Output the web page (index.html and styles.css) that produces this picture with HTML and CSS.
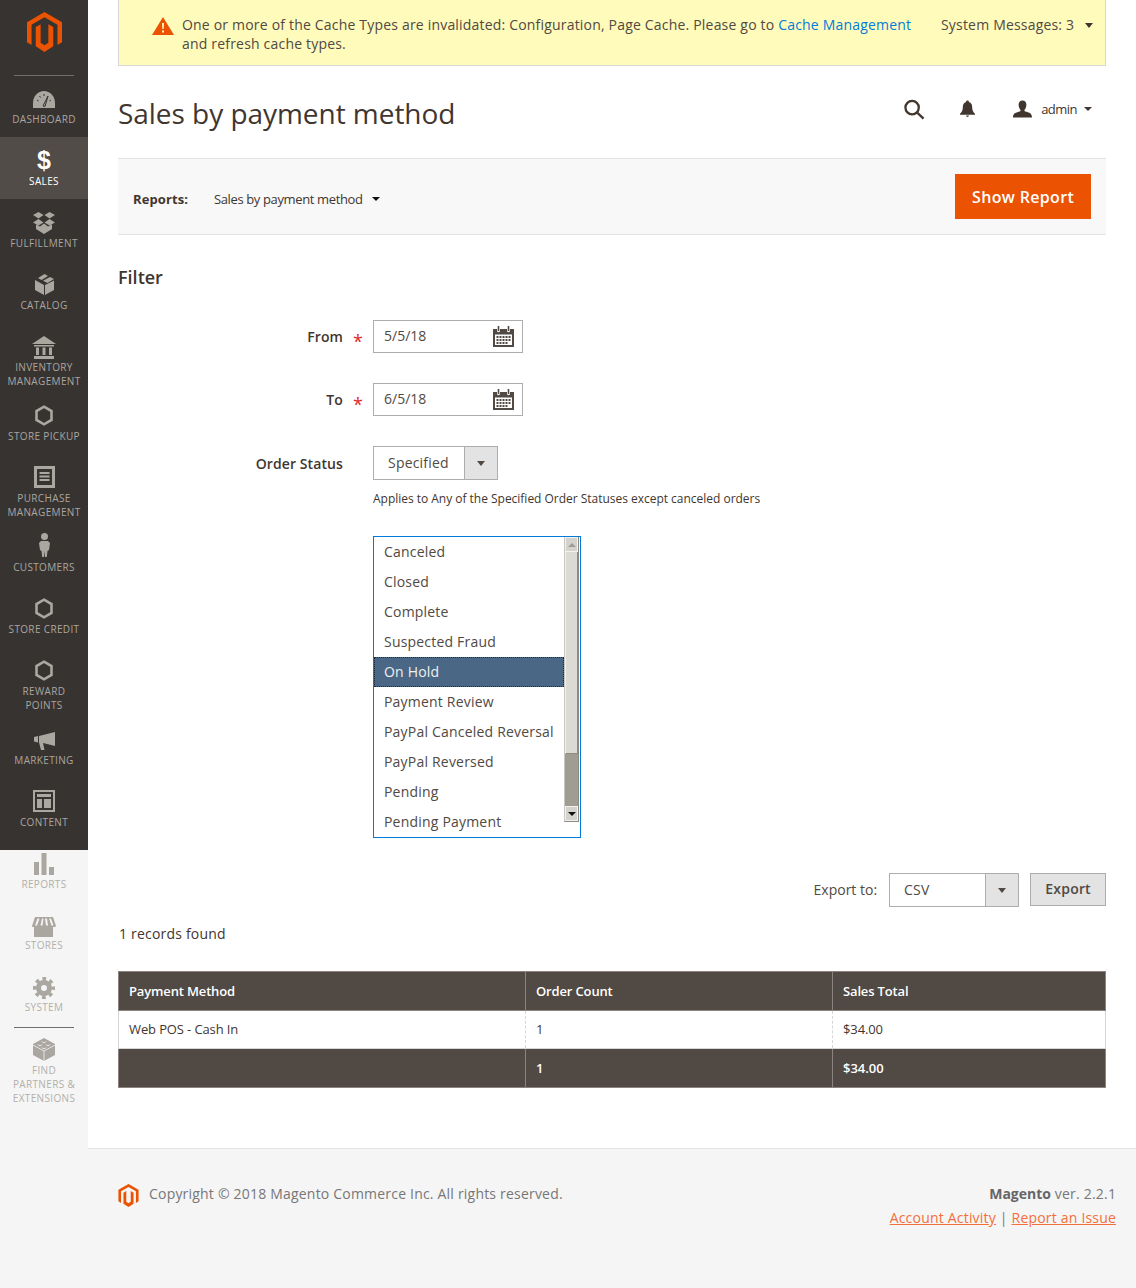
FILE: index.html
```html
<!DOCTYPE html>
<html lang="en">
<head>
  <meta charset="UTF-8">
  <title>Sales by payment method</title>
  <link rel="stylesheet" href="styles.css">
</head>
<body>

  <!-- Sidebar -->
  <nav class="menu">
    <div class="menu__dark">
      <div class="menu__logo">
        <svg class="logo logo--big" viewBox="0 0 100 114"><path d="M50 0 L100 29 V86 L87 94 V36 L50 15 L13 36 V94 L0 86 V29 Z"/><path d="M25 43 L39 35 V88 L50 95 L61 88 V35 L75 43 V98 L50 114 L25 98 Z"/></svg>
      </div>
      <a class="menu__item">
        <span class="menu__icon menu__icon--down"><svg width="22" height="17" viewBox="0 0 22 17"><path d="M0 17 V12 C0 5 5 0 11 0 C17 0 22 5 22 12 V17 Z"/><path class="cut" d="M10 15 L15 5 L12 15.500 Z M4 9 l1.500 1 M6.500 5 l1 1.500 M11 3 v2 M18 9 l-1.500 1" stroke-width="1"/></svg></span>
        <span class="menu__label">Dashboard</span>
      </a>
      <a class="menu__item menu__item--active">
        <span class="menu__icon"><span class="dollar">$</span></span>
        <span class="menu__label">Sales</span>
      </a>
      <a class="menu__item">
        <span class="menu__icon"><svg width="22" height="22" viewBox="0 0 22 22"><path d="M5.500 0 L10.500 3 L5.500 6.500 L0 3 Z M16.500 0 L22 3 L16.500 6.500 L11.500 3 Z M5.500 7 L10.500 10.500 L5.500 13.500 L0 10.500 Z M16.500 7 L22 10.500 L16.500 13.500 L11.500 10.500 Z M11 11.500 L15 14.500 L19 12.500 V17 L11 22 L3 17 V12.500 L7 14.500 Z"/></svg></span>
        <span class="menu__label">Fulfillment</span>
      </a>
      <a class="menu__item">
        <span class="menu__icon"><svg width="19" height="21" viewBox="0 0 19 21"><path d="M9.500 0 L13 2 L6.500 6 L3 4 Z M15 3 L19 5 L12.500 9 L9.500 7.500 L8 6.800 Z M0 6 L9 11 V21 L0 16 Z M19 6.500 V16 L10 21 V11 Z"/></svg></span>
        <span class="menu__label">Catalog</span>
      </a>
      <a class="menu__item menu__item--two">
        <span class="menu__icon menu__icon--down"><svg width="24" height="23" viewBox="0 0 24 23"><path d="M12 0 L24 8 H0 Z M2 9 H22 V10.500 H2 Z M4 11.500 H7 V19 H4 Z M10.500 11.500 H13.500 V19 H10.500 Z M17 11.500 H20 V19 H17 Z M2 20 H22 V23 H2 Z"/></svg></span>
        <span class="menu__label">Inventory Management</span>
      </a>
      <a class="menu__item">
        <span class="menu__icon"><svg width="18" height="21" viewBox="0 0 18 21"><path class="hex" d="M9 1.700 L16.500 6 V15 L9 19.300 L1.500 15 V6 Z"/></svg></span>
        <span class="menu__label">Store Pickup</span>
      </a>
      <a class="menu__item menu__item--two">
        <span class="menu__icon menu__icon--up"><svg width="21" height="22" viewBox="0 0 21 22"><path fill-rule="evenodd" d="M0 0 H21 V22 H0 Z M3 3 V19 H18 V3 Z M5.500 6 H15.500 V8 H5.500 Z M5.500 9.500 H15.500 V11.500 H5.500 Z M5.500 13 H15.500 V15 H5.500 Z"/></svg></span>
        <span class="menu__label">Purchase Management</span>
      </a>
      <a class="menu__item">
        <span class="menu__icon menu__icon--up2"><svg width="11" height="24" viewBox="0 0 11 24"><circle cx="5.500" cy="3.500" r="3.500"/><path d="M2 8 H9 L11 10 L10 17 L8.500 18 L7.800 24 H6 L5.500 18 L5 24 H3.200 L2.500 18 L1 17 L0 10 Z"/></svg></span>
        <span class="menu__label">Customers</span>
      </a>
      <a class="menu__item">
        <span class="menu__icon"><svg width="18" height="21" viewBox="0 0 18 21"><path class="hex" d="M9 1.700 L16.500 6 V15 L9 19.300 L1.500 15 V6 Z"/></svg></span>
        <span class="menu__label">Store Credit</span>
      </a>
      <a class="menu__item menu__item--two">
        <span class="menu__icon"><svg width="18" height="21" viewBox="0 0 18 21"><path class="hex" d="M9 1.700 L16.500 6 V15 L9 19.300 L1.500 15 V6 Z"/></svg></span>
        <span class="menu__label">Reward<br>Points</span>
      </a>
      <a class="menu__item">
        <span class="menu__icon menu__icon--down"><svg width="21" height="18" viewBox="0 0 21 18"><path d="M21 0 V14 L9 11 L10.500 18 H7 L5 10.500 V4 Z M0 5 L4 4 V10.500 L0 9.500 Z"/></svg></span>
        <span class="menu__label">Marketing</span>
      </a>
      <a class="menu__item menu__item--last">
        <span class="menu__icon menu__icon--up"><svg width="22" height="22" viewBox="0 0 22 22"><path fill-rule="evenodd" d="M0 0 H22 V22 H0 Z M2 2 V20 H20 V2 Z M4 4 H18 V7 H4 Z M4 9 H9 V18 H4 Z M11 9 H18 V18 H11 Z"/></svg></span>
        <span class="menu__label">Content</span>
      </a>
    </div>
    <div class="menu__light">
      <a class="menu__item menu__item--first">
        <span class="menu__icon"><svg width="20" height="22" viewBox="0 0 20 22"><path d="M0 9 H5 V22 H0 Z M7.500 0 H12.500 V22 H7.500 Z M15 14 H20 V22 H15 Z"/></svg></span>
        <span class="menu__label">Reports</span>
      </a>
      <a class="menu__item">
        <span class="menu__icon menu__icon--down2"><svg width="24" height="20" viewBox="0 0 24 20"><path fill-rule="evenodd" d="M3 0 H21 L24 9 C24 10 22 10 21 10 V20 H2 V10 C1 10 0 10 0 9 Z M5.500 1.500 L3 8.500 H5 L7.500 1.500 Z M10 1.500 L8.500 8.500 H10.500 L11.500 1.500 Z M13 1.500 L14 8.500 H16 L15 1.500 Z M17 1.500 L19.500 8.500 H21.500 L19 1.500 Z"/></svg></span>
        <span class="menu__label">Stores</span>
      </a>
      <a class="menu__item">
        <span class="menu__icon menu__icon--down"><svg width="22" height="22" viewBox="0 0 22 22"><circle class="gear" cx="11" cy="11" r="5.500"/><circle class="gear__teeth" cx="11" cy="11" r="9"/></svg></span>
        <span class="menu__label">System</span>
      </a>
      <a class="menu__item menu__item--partners">
        <span class="menu__icon menu__icon--down"><svg width="22" height="23" viewBox="0 0 22 23"><path d="M11 0 L22 6 V17 L11 23 L0 17 V6 Z"/><path class="cut" d="M0 7 L11 13 L22 7 M11 13 V23 M5 6.500 C5 8 9 8 9 6.500 M13 6.500 C13 8 17 8 17 6.500 M9 3.500 C9 5 13 5 13 3.500 M9 9.500 C9 11 13 11 13 9.500" stroke-width="0.800"/></svg></span>
        <span class="menu__label">Find<br>Partners &amp;<br>Extensions</span>
      </a>
    </div>
  </nav>

  <div class="page">
    <main class="page__main">

      <!-- System message -->
      <div class="message">
        <svg class="message__icon" width="22" height="18" viewBox="0 0 22 18"><path fill-rule="evenodd" d="M11 0 L22 18 H0 Z M10 6 L10.300 12 H11.700 L12 6 Z M10 13.500 V15.500 H12 V13.500 Z"/></svg>
        <p class="message__text">One or more of the Cache Types are invalidated: Configuration, Page Cache. Please go to <a class="link">Cache Management</a> and refresh cache types.</p>
        <div class="message__count">System Messages: 3 <span class="caret caret--msg"></span></div>
      </div>

      <!-- Title and actions -->
      <header class="head">
        <h1 class="head__title">Sales by payment method</h1>
        <div class="head__actions">
          <svg class="head__search" width="21" height="21" viewBox="0 0 22 21"><circle cx="8.500" cy="8.500" r="7" /><path d="M13.500 13.500 L20.500 20"/></svg>
          <svg class="head__bell" width="15" height="18" viewBox="0 0 16 18"><path d="M8 0 C9 0 9.500 .7 9.500 1.500 C12 2.300 13 4.500 13 7 C13 10 14 12 16 14 V15 H0 V14 C2 12 3 10 3 7 C3 4.500 4 2.300 6.500 1.500 C6.500 .7 7 0 8 0 Z M6.500 16 H9.500 C9.500 18 6.500 18 6.500 16 Z"/></svg>
          <svg class="head__user" width="19" height="18" viewBox="0 0 20 18"><path d="M10 0 C13 0 14.500 2.500 14 5.500 C13.700 7.500 13 9 12 10 C12 11 12.500 11.500 14 12 C17 13 20 13.500 20 18 H0 C0 13.500 3 13 6 12 C7.500 11.500 8 11 8 10 C7 9 6.300 7.500 6 5.500 C5.500 2.500 7 0 10 0 Z"/></svg>
          <span class="head__admin">admin</span>
          <span class="caret caret--head"></span>
        </div>
      </header>

      <!-- Report switcher -->
      <div class="toolbar">
        <strong class="toolbar__label">Reports:</strong>
        <span class="toolbar__value">Sales by payment method</span>
        <span class="caret caret--dark"></span>
        <button class="btn-primary">Show Report</button>
      </div>

      <h2 class="filter-title">Filter</h2>

      <div class="field">
        <label class="field__label">From</label>
        <span class="field__star">*</span>
        <div class="date-input">
          <span>5/5/18</span>
          <svg width="21" height="22" viewBox="0 0 21 22"><use href="#cal"/></svg>
        </div>
      </div>
      <div class="field">
        <label class="field__label">To</label>
        <span class="field__star">*</span>
        <div class="date-input">
          <span>6/5/18</span>
          <svg width="21" height="22" viewBox="0 0 21 22"><use href="#cal"/></svg>
        </div>
      </div>
      <div class="field">
        <label class="field__label">Order Status</label>
        <span class="field__star"></span>
        <div class="select select--status">
          <span class="select__value">Specified</span>
          <span class="select__arrow"><span class="caret caret--select"></span></span>
        </div>
      </div>
      <p class="note">Applies to Any of the Specified Order Statuses except canceled orders</p>

      <!-- Status multiselect -->
      <div class="multi">
        <ul class="multi__list">
          <li>Canceled</li>
          <li>Closed</li>
          <li>Complete</li>
          <li>Suspected Fraud</li>
          <li class="is-selected">On Hold</li>
          <li>Payment Review</li>
          <li>PayPal Canceled Reversal</li>
          <li>PayPal Reversed</li>
          <li>Pending</li>
          <li>Pending Payment</li>
        </ul>
        <div class="scroll">
          <span class="scroll__btn"><span class="scroll__up"></span></span>
          <span class="scroll__thumb"></span>
          <span class="scroll__trough"></span>
          <span class="scroll__btn"><span class="scroll__down"></span></span>
        </div>
      </div>

      <div class="export">
        <span class="export__label">Export to:</span>
        <div class="select select--export">
          <span class="select__value">CSV</span>
          <span class="select__arrow"><span class="caret caret--select"></span></span>
        </div>
        <button class="btn-export">Export</button>
      </div>

      <p class="records">1 records found</p>

      <table class="grid">
        <thead>
          <tr>
            <th class="col-a">Payment Method</th>
            <th class="col-b">Order Count</th>
            <th>Sales Total</th>
          </tr>
        </thead>
        <tbody>
          <tr>
            <td>Web POS - Cash In</td>
            <td>1</td>
            <td>$34.00</td>
          </tr>
        </tbody>
        <tfoot>
          <tr>
            <td></td>
            <td>1</td>
            <td>$34.00</td>
          </tr>
        </tfoot>
      </table>
    </main>

    <footer class="foot">
      <div class="foot__left">
        <svg class="logo logo--small" viewBox="0 0 100 114"><path d="M50 0 L100 29 V86 L87 94 V36 L50 15 L13 36 V94 L0 86 V29 Z"/><path d="M25 43 L39 35 V88 L50 95 L61 88 V35 L75 43 V98 L50 114 L25 98 Z"/></svg>
        <span>Copyright © 2018 Magento Commerce Inc. All rights reserved.</span>
      </div>
      <div class="foot__right">
        <div class="foot__version"><strong>Magento</strong> ver. 2.2.1</div>
        <div class="foot__links"><a>Account Activity</a> <span>|</span> <a>Report an Issue</a></div>
      </div>
    </footer>
  </div>

  <!-- calendar icon, used by both date inputs -->
  <svg class="defs" width="0" height="0">
    <symbol id="cal" viewBox="0 0 21 22">
      <path fill="#514943" fill-rule="evenodd" d="M0 3 H4 V5 C4 6.500 7 6.500 7 5 V3 H14 V5 C14 6.500 17 6.500 17 5 V3 H21 V21 H0 Z M2 8.500 V19 H19 V8.500 Z"/>
      <path fill="#514943" d="M4.700 0 H6.300 V5 H4.700 Z M14.700 0 H16.300 V5 H14.700 Z M3.500 10 H5.500 V12 H3.500 Z M6.500 10 H8.500 V12 H6.500 Z M9.500 10 H11.500 V12 H9.500 Z M12.500 10 H14.500 V12 H12.500 Z M15.500 10 H17.500 V12 H15.500 Z M3.500 13 H5.500 V15 H3.500 Z M6.500 13 H8.500 V15 H6.500 Z M9.500 13 H11.500 V15 H9.500 Z M12.500 13 H14.500 V15 H12.500 Z M15.500 13 H17.500 V15 H15.500 Z M3.500 16 H5.500 V18 H3.500 Z M6.500 16 H8.500 V18 H6.500 Z M9.500 16 H11.500 V18 H9.500 Z M12.500 16 H14.500 V18 H12.500 Z"/>
    </symbol>
  </svg>

</body>
</html>
```

FILE: styles.css
```css
/* Reset */
*, *::before, *::after {
  margin: 0;
  padding: 0;
  box-sizing: border-box;
}
body {
  display: flex;
  min-height: 1288px;
  font-family: "Open Sans", sans-serif;
  font-size: 14px;
  color: #41362f;
  background: #f5f5f5;
}
.defs {
  position: absolute;
}

/* ===== Sidebar ===== */
.menu {
  width: 88px;
  flex: none;
}
.menu__dark {
  background: #373330;
  height: 850px;
}
.menu__logo {
  height: 76px;
  margin: 0 14px;
  padding-top: 12px;
  border-bottom: 1px solid #736d69;
  display: flex;
  justify-content: center;
}
.logo {
  fill: #eb5202;
}
.logo--big {
  width: 35px;
  height: 40px;
}
.logo--small {
  width: 21px;
  height: 23px;
}
.menu__item {
  display: block;
  height: 62px;
  padding-top: 11px;
  color: #aaa6a0;
  text-align: center;
}
.menu__item:nth-child(2) {
  margin-top: -1px;
}
.menu__item--two {
  height: 69px;
}
.menu__item--last {
  height: 72px;
}
.menu__item--first {
  height: 52px;
  padding-top: 1px;
}
.menu__item--partners {
  margin: 2px 14px 0;
  padding-top: 8px;
  border-top: 1px solid #736d69;
  height: auto;
}
.menu__item--partners .menu__label {
  margin: 1px -14px 0;
  line-height: 14px;
}
.menu__item--active {
  background: #514c48;
  color: #fff;
}
.menu__icon {
  display: flex;
  height: 25px;
  margin-bottom: 2px;
  align-items: center;
  justify-content: center;
}
/* nudges so each glyph sits where the original icon font put it */
.menu__icon--down svg {
  margin-top: 2px;
}
.menu__icon--down2 svg {
  margin-top: 4px;
}
.menu__icon--up svg {
  margin-bottom: 2px;
}
.menu__icon--up2 svg {
  margin-bottom: 4px;
}
.menu__icon svg {
  fill: currentColor;
}
.menu__icon .cut {
  fill: none;
  stroke: #373330;
}
.menu__light .menu__icon .cut {
  stroke: #f5f5f5;
}
.menu__icon .hex {
  fill: none;
  stroke: currentColor;
  stroke-width: 2.600;
}
.menu__icon .gear {
  fill: none;
  stroke: currentColor;
  stroke-width: 5;
}
.menu__icon .gear__teeth {
  fill: none;
  stroke: currentColor;
  stroke-width: 4;
  stroke-dasharray: 3.600 3.470;
  stroke-dashoffset: 1.800;
}
.menu__label {
  display: block;
  font-size: 10px;
  line-height: 13.500px;
  letter-spacing: .35px;
  text-transform: uppercase;
}
.menu__light .menu__label {
  color: #b3afa9;
}
.dollar {
  font-family: "Liberation Sans", sans-serif;
  font-weight: 700;
  font-size: 25px;
  line-height: 25px;
}

/* ===== Main column ===== */
.page {
  flex: 1;
  display: flex;
  flex-direction: column;
  background: #fff;
}
.page__main {
  flex: 1;
  padding: 0 30px;
}
.link {
  color: #007bdb;
}

/* Carets */
.caret {
  display: inline-block;
  width: 0;
  height: 0;
  border-style: solid;
  border-color: #41362f transparent transparent;
  border-width: 5px 4.500px 0;
}
.caret--msg {
  margin-left: 7px;
  vertical-align: 2px;
}
.caret--head {
  border-color: #41362f transparent transparent;
  margin-left: 7px;
  border-width: 4.500px 4.500px 0;
}
.caret--dark {
  margin: 5px 0 0 9px;
  border-color: #111 transparent transparent;
  border-width: 4.500px 4.500px 0;
}
.caret--select {
  border-color: #514943 transparent transparent;
  border-width: 5px 4px 0;
}

/* Message */
.message {
  height: 66px;
  display: flex;
  padding: 15px 12px 0 33px;
  background: #fffbbb;
  border: 1px solid #d6d6d6;
  border-top: 0;
  color: #514943;
  line-height: 19px;
  letter-spacing: .19px;
}
.message__icon {
  flex: none;
  fill: #eb5202;
  margin-top: 2px;
  margin-right: 8px;
}
.message__text {
  width: 747px;
}
.message__count {
  margin-left: 12px;
  white-space: nowrap;
}

/* Page head */
.head {
  height: 92px;
  display: flex;
  justify-content: space-between;
}
.head__title {
  font-size: 28px;
  font-weight: 400;
  line-height: 38px;
  margin-top: 28px;
  letter-spacing: -.04px;
}
.head__actions {
  display: flex;
  align-items: center;
  height: 86px;
  margin-right: 14px;
}
.head__search {
  fill: none;
  stroke: #41362f;
  stroke-width: 2.400;
}
.head__bell {
  margin-left: 35px;
  fill: #41362f;
}
.head__user {
  margin-left: 38px;
  fill: #41362f;
}
.head__admin {
  margin-left: 9px;
  font-size: 13px;
  letter-spacing: -.5px;
}

/* Toolbar */
.toolbar {
  height: 77px;
  display: flex;
  align-items: center;
  padding: 0 15px;
  background: #f8f8f8;
  border-top: 1px solid #e3e3e3;
  border-bottom: 1px solid #e3e3e3;
  font-size: 13px;
}
.toolbar__label {
  font-weight: 700;
  width: 81px;
  padding-top: 4px;
  letter-spacing: .1px;
}
.toolbar__value {
  letter-spacing: -.37px;
  padding-top: 4px;
}
.btn-primary {
  margin-left: auto;
  width: 136px;
  height: 45px;
  border: 0;
  background: #eb5202;
  color: #fff;
  font: 600 16px "Open Sans", sans-serif;
  letter-spacing: .33px;
}

/* Filter form */
.filter-title {
  margin-top: 30px;
  font-size: 18px;
  font-weight: 600;
  line-height: 25px;
}
.field {
  display: flex;
  align-items: center;
  margin-top: 30px;
}
.field__label {
  width: 225px;
  text-align: right;
  font-weight: 600;
  color: #41362f;
  letter-spacing: .1px;
}
.field__star {
  width: 30px;
  text-align: center;
  color: #e22626;
  font-size: 18px;
  line-height: 18px;
  position: relative;
  top: 4px;
}
.date-input {
  width: 150px;
  height: 33px;
  display: flex;
  align-items: center;
  justify-content: space-between;
  padding: 0 8px 0 10px;
  border: 1px solid #adadad;
  background: #fff;
  color: #514943;
}
.date-input span {
  position: relative;
  top: -1px;
}
.select {
  display: flex;
  height: 34px;
  border: 1px solid #adadad;
  background: #fff;
  color: #514943;
}
.select--status {
  width: 125px;
}
.select--export {
  width: 130px;
  margin-left: 12px;
}
.select__value {
  flex: 1;
  padding-left: 14px;
  line-height: 32px;
  letter-spacing: .2px;
}
.select__arrow {
  width: 33px;
  border-left: 1px solid #adadad;
  background: #e3e3e3;
  display: flex;
  align-items: center;
  justify-content: center;
}
.note {
  margin: 10px 0 0 255px;
  font-size: 12px;
  line-height: 17px;
  letter-spacing: -.02px;
  color: #41362f;
}

/* Multiselect */
.multi {
  display: flex;
  width: 208px;
  height: 302px;
  margin: 29px 0 0 255px;
  border: 1px solid #007bdb;
  background: #fff;
  overflow: hidden;
}
.multi__list {
  flex: 1;
  list-style: none;
  color: #514943;
  letter-spacing: .2px;
}
.multi__list li {
  height: 30px;
  line-height: 30px;
  padding-left: 10px;
  white-space: nowrap;
}
.multi__list .is-selected {
  background: #4a6885;
  color: #eef1f4;
  outline: 1px dotted #1e2a36;
  outline-offset: -1px;
}
.scroll {
  width: 15px;
  height: 285px;
  margin-right: 1px;
  display: flex;
  flex-direction: column;
  border-right: 1px solid #8d8a82;
  border-bottom: 1px solid #8d8a82;
  border-left: 1px solid #c8c6c0;
  background: #dcdad5;
}
.scroll__btn {
  height: 15px;
  flex: none;
  display: flex;
  align-items: center;
  justify-content: center;
  background: #d4d2cc;
  border: 1px solid #f2f1ee;
}
.scroll__up {
  border-style: solid;
  border-color: transparent transparent #a09c94;
  border-width: 0 4px 4px;
}
.scroll__down {
  border-style: solid;
  border-color: #111 transparent transparent;
  border-width: 4px 4px 0;
}
.scroll__thumb {
  height: 202px;
  flex: none;
  background: #dcdad5;
  border-right: 1px solid #8d8a82;
  border-bottom: 1px solid #8d8a82;
  border-left: 1px solid #f2f1ee;
}
.scroll__trough {
  flex: 1;
  background: #a09c94;
}

/* Export row */
.export {
  display: flex;
  align-items: center;
  justify-content: flex-end;
  margin-top: 35px;
  color: #514943;
}
.export__label {
  padding-bottom: 2px;
}
.btn-export {
  width: 76px;
  height: 33px;
  margin-left: 11px;
  margin-top: -1px;
  padding-bottom: 2px;
  background: #e3e3e3;
  border: 1px solid #adadad;
  color: #514943;
  font: 600 14px "Open Sans", sans-serif;
  letter-spacing: .2px;
}
.records {
  margin: 17px 0 0 1px;
  line-height: 20px;
  color: #41362f;
  letter-spacing: .2px;
}

/* Data grid */
.grid {
  width: 988px;
  margin-top: 27px;
  border-collapse: collapse;
  table-layout: fixed;
  font-size: 13px;
}
.col-a {
  width: 407px;
}
.col-b {
  width: 307px;
}
.grid th,
.grid tfoot td {
  background: #514943;
  color: #fff;
  border: 1px solid #8a837f;
  text-align: left;
}
.grid th {
  height: 39px;
  font-weight: 600;
  padding: 0 10px 1px;
  letter-spacing: -.15px;
}
.grid tbody td {
  height: 38px;
  padding: 0 10px 2px;
  color: #41362f;
  border-left: 1px dashed #d6d6d6;
  border-right: 1px dashed #d6d6d6;
  border-bottom: 1px solid #d6d6d6;
  letter-spacing: -.12px;
}
.grid tbody td:first-child {
  border-left: 1px solid #d6d6d6;
}
.grid tbody td:last-child {
  border-right: 1px solid #d6d6d6;
}
.grid tfoot td {
  height: 39px;
  padding: 0 10px;
  font-weight: 600;
}

/* Footer */
.foot {
  height: 140px;
  display: flex;
  justify-content: space-between;
  padding: 35px 20px 0 30px;
  background: #f5f5f5;
  border-top: 1px solid #e3e3e3;
  color: #777;
  letter-spacing: .2px;
}
.foot__left {
  display: flex;
  gap: 10px;
  line-height: 20px;
}
.foot__right {
  text-align: right;
  line-height: 24px;
  margin-top: -2px;
}
.foot__version strong {
  color: #666;
  letter-spacing: 0;
}
.foot__links a {
  color: #f46f3a;
  text-decoration: underline;
}
```
